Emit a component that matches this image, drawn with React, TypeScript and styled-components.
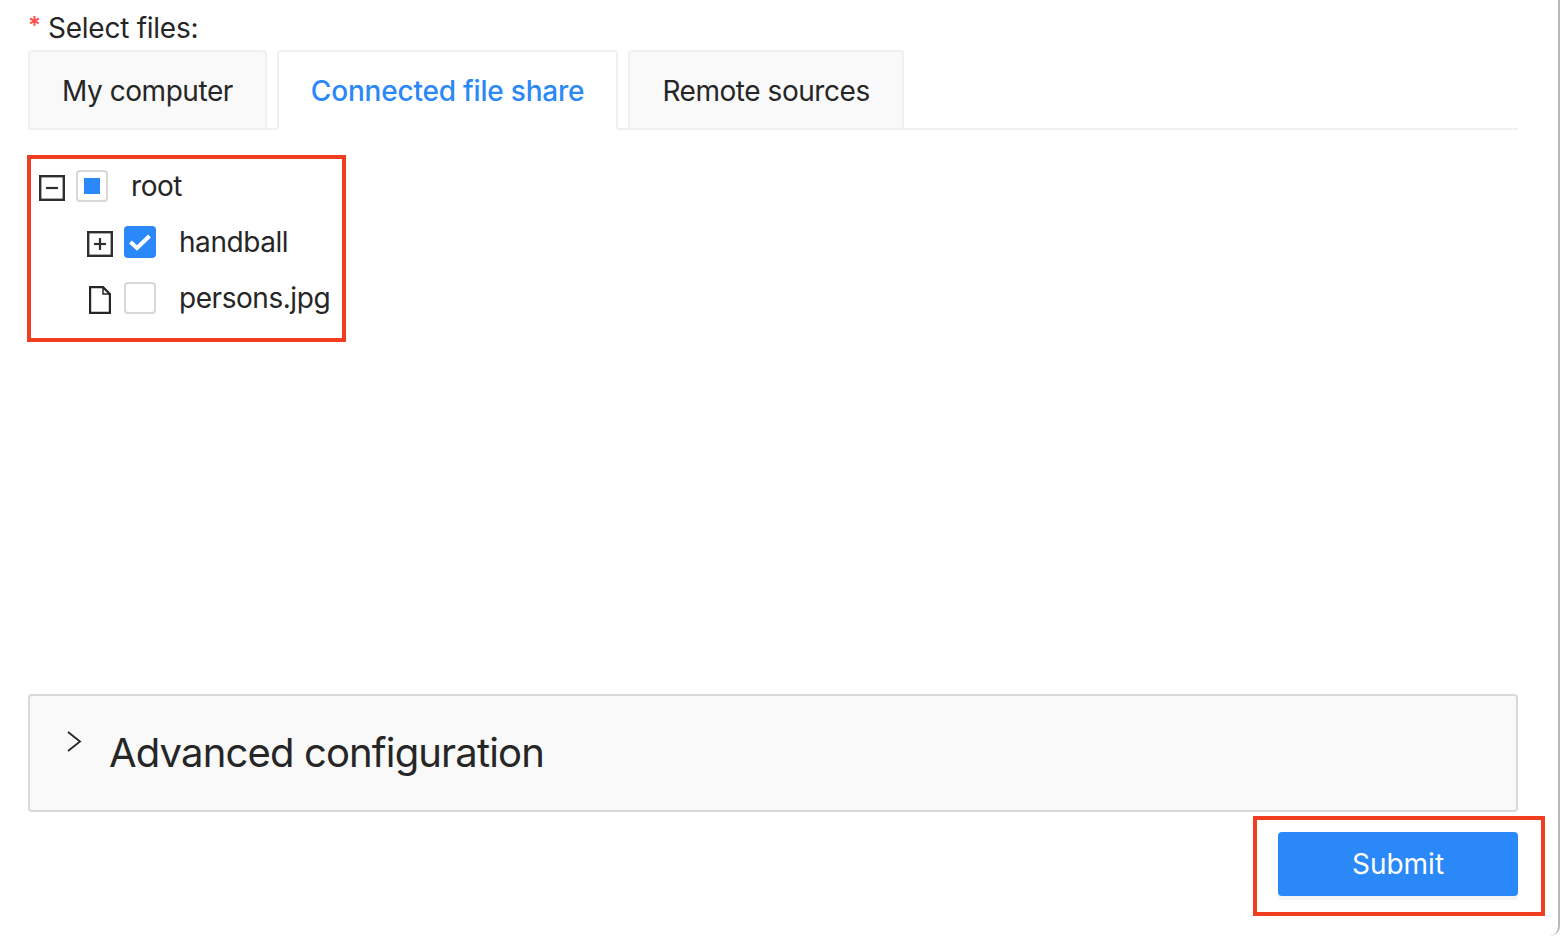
import React from 'react'
import styled, { createGlobalStyle } from 'styled-components'

const GlobalStyle = createGlobalStyle`
  html, body { margin: 0; padding: 0; background: #fff; }
  body { font-family: Inter, "Liberation Sans", sans-serif; color: #262626; overflow: hidden; }
`

const Frame = styled.div`
  box-sizing: border-box;
  width: 1560px;
  height: 936px;
  padding: 12px 40px 0 28px;
  border-right: 2px solid #b8b8b8;
  border-bottom-right-radius: 10px;
  display: flex;
  flex-direction: column;
`

const FieldLabel = styled.div`
  height: 38px;
  display: flex;
  align-items: flex-start;
  font-size: 28px;
  line-height: 33px;
  letter-spacing: -0.25px;
  white-space: nowrap;
`

const Required = styled.span`
  color: #ff4d4f;
  font-size: 24px;
  font-weight: 600;
  line-height: 28px;
  width: 20px;
`

const TabBar = styled.div`
  display: flex;
  gap: 10px;
  height: 80px;
  box-sizing: border-box;
  border-bottom: 2px solid #f0f0f0;
`

const Tab = styled.div<{ $active?: boolean }>`
  box-sizing: border-box;
  height: ${p => (p.$active ? 80 : 78)}px;
  padding: 1px 32px 0;
  display: flex;
  align-items: center;
  font-size: 28px;
  font-weight: ${p => (p.$active ? 500 : 400)};
  letter-spacing: ${p => (p.$active ? -0.2 : -0.45)}px;
  white-space: nowrap;
  border: 2px solid #f0f0f0;
  border-bottom: ${p => (p.$active ? '2px solid #fff' : 'none')};
  border-radius: 4px 4px 0 0;
  background: ${p => (p.$active ? '#fff' : '#f9f9f9')};
  color: ${p => (p.$active ? '#2b88f8' : '#262626')};
`

const Highlight = styled.div`
  box-sizing: border-box;
  border: 4px solid #f03c1f;
`

const TreeBox = styled(Highlight)`
  align-self: flex-start;
  width: 319px;
  height: 187px;
  margin: 25px 0 0 -1px;
  padding-left: 8px;
  display: flex;
  flex-direction: column;
`

const TreeRow = styled.div<{ $indent?: boolean }>`
  height: 56px;
  flex-shrink: 0;
  display: flex;
  align-items: center;
  padding-left: ${p => (p.$indent ? 48 : 0)}px;
  &:first-child { margin-top: -1px; }
`

const Switcher = styled.div`
  width: 26px;
  height: 26px;
  margin-top: 3px;
  display: flex;
  align-items: center;
  justify-content: center;
  flex-shrink: 0;
`

const Check = styled.div<{ $checked?: boolean }>`
  box-sizing: border-box;
  width: 32px;
  height: 32px;
  margin-left: 11px;
  border-radius: 4px;
  border: 2px solid ${p => (p.$checked ? '#2b88f8' : '#d9d9d9')};
  background: ${p => (p.$checked ? '#2b88f8' : '#fff')};
  display: flex;
  align-items: center;
  justify-content: center;
  flex-shrink: 0;
`

const HalfMark = styled.div`
  width: 16px;
  height: 16px;
  background: #2b88f8;
`

const NodeTitle = styled.span`
  margin-left: 23px;
  font-size: 28px;
  letter-spacing: -0.45px;
  white-space: nowrap;
`

const Spacer = styled.div`
  flex: 1;
`

const Collapse = styled.div`
  box-sizing: border-box;
  height: 118px;
  border: 2px solid #d9d9d9;
  border-radius: 4px;
  background: #f9f9f9;
  display: flex;
  padding-left: 36px;
`

const Arrow = styled.div`
  width: 43px;
  padding-top: 35px;
  flex-shrink: 0;
`

const CollapseTitle = styled.div`
  font-size: 40px;
  line-height: 114px;
  letter-spacing: -0.85px;
  white-space: nowrap;
`

const SubmitBox = styled(Highlight)`
  align-self: flex-end;
  width: 292px;
  height: 100px;
  margin: 4px -27px 20px 0;
  padding: 12px 0 0 21px;
`

const SubmitButton = styled.button`
  display: block;
  width: 240px;
  height: 64px;
  border: none;
  border-radius: 4px;
  padding: 0;
  background: #2b88f8;
  color: #fff;
  font-family: inherit;
  font-size: 28px;
  box-shadow: 0 4px 0 rgba(0, 0, 0, 0.045);
`

const BoxIcon = ({ plus }: { plus?: boolean }) => (
  <svg width="26" height="26" viewBox="0 0 26 26" fill="none" stroke="#2e2e2e">
    <rect x="1.200" y="1.200" width="23.600" height="23.600" strokeWidth="2.400" />
    <path d="M7 13H19" strokeWidth="2.200" />
    {plus && <path d="M13 7V19" strokeWidth="2.200" />}
  </svg>
)

const FileIcon = () => (
  <svg width="22" height="28" viewBox="0 0 22 28" fill="none" stroke="#262626" strokeWidth="2.200">
    <path d="M1.100 1.100H14L20.900 8V26.900H1.100Z" />
    <path d="M14 1V8H21" strokeWidth="1.500" />
  </svg>
)

const TickIcon = () => (
  <svg width="22" height="18" viewBox="0 0 22 18" fill="none" stroke="#fff" strokeWidth="4">
    <path d="M1.500 9L8 15L20.500 3" />
  </svg>
)

const ArrowIcon = () => (
  <svg width="16" height="22" viewBox="0 0 16 22" fill="none" stroke="#262626" strokeWidth="1.800">
    <path d="M2 1L14 10.500L2 20" />
  </svg>
)

export default function App() {
  return (
    <Frame>
      <GlobalStyle />
      <FieldLabel>
        <Required>*</Required>
        Select files:
      </FieldLabel>
      <TabBar>
        <Tab>My computer</Tab>
        <Tab $active>Connected file share</Tab>
        <Tab>Remote sources</Tab>
      </TabBar>
      <TreeBox>
        <TreeRow>
          <Switcher><BoxIcon /></Switcher>
          <Check><HalfMark /></Check>
          <NodeTitle>root</NodeTitle>
        </TreeRow>
        <TreeRow $indent>
          <Switcher><BoxIcon plus /></Switcher>
          <Check $checked><TickIcon /></Check>
          <NodeTitle>handball</NodeTitle>
        </TreeRow>
        <TreeRow $indent>
          <Switcher><FileIcon /></Switcher>
          <Check />
          <NodeTitle>persons.jpg</NodeTitle>
        </TreeRow>
      </TreeBox>
      <Spacer />
      <Collapse>
        <Arrow><ArrowIcon /></Arrow>
        <CollapseTitle>Advanced configuration</CollapseTitle>
      </Collapse>
      <SubmitBox>
        <SubmitButton>Submit</SubmitButton>
      </SubmitBox>
    </Frame>
  )
}
